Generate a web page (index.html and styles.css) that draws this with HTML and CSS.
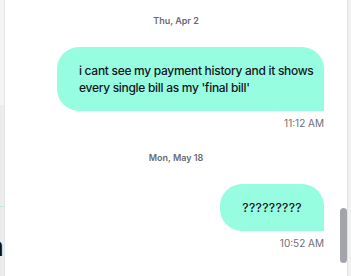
FILE: index.html
```html
<!DOCTYPE html>
<html>
<head>
<meta charset="utf-8">
<link rel="stylesheet" href="styles.css">
</head>
<body>
<div class="app">
  <aside class="side">
    <div class="side-top"></div>
    <div class="side-bottom">
      <div class="side-line"></div>
      <div class="side-letter">a</div>
    </div>
  </aside>
  <main class="chat">
    <div class="date">Thu, Apr 2</div>
    <div class="msg">
      <div class="bubble">i cant see my payment history and it shows every single bill as my 'final bill'</div>
      <div class="time">11:12 AM</div>
    </div>
    <div class="date date-2">Mon, May 18</div>
    <div class="msg">
      <div class="bubble bubble-short">?????????</div>
      <div class="time">10:52 AM</div>
    </div>
    <div class="thumb"></div>
  </main>
  <div class="track"></div>
</div>
</body>
</html>
```
FILE: styles.css
```css
* { box-sizing: border-box; }
html, body { margin: 0; padding: 0; }
body {
  width: 351px;
  height: 276px;
  overflow: hidden;
  background: #fff;
  font-family: "Inter", "Noto Sans", sans-serif;
  color: #1d1d26;
}
.app {
  display: flex;
  height: 276px;
}
.side {
  width: 5px;
  flex: none;
  display: flex;
  flex-direction: column;
  overflow: hidden;
  border-right: 1px solid #e6e6e6;
}
.side-top {
  height: 105px;
  background: #f4f4f4;
}
.side-bottom {
  flex: 1;
  background: #ececec;
  position: relative;
  padding-top: 101px;
}
.side-line {
  height: 1px;
  background: #bfe6e0;
}
.side-letter {
  font-size: 26px;
  line-height: 30px;
  margin-top: 25px;
  margin-left: -11px;
  color: #111;
  font-weight: 500;
}
.chat {
  flex: 1;
  position: relative;
  padding: 15px 23px 0 0;
  display: flex;
  flex-direction: column;
}
.date {
  text-align: center;
  font-size: 9px;
  line-height: 12px;
  font-weight: 600;
  color: #6a6a75;
  padding-left: 23px;
}
.date-2 { margin-top: 23px; }
.msg {
  display: flex;
  flex-direction: column;
  align-items: flex-end;
  margin-top: 20px;
}
.bubble {
  width: 267px;
  background: #96fde0;
  border-radius: 22px 22px 0 22px;
  padding: 15px 2px 15px 22px;
  font-size: 12px;
  line-height: 17px;
  font-weight: 500;
  letter-spacing: -0.3px;
  color: #16161d;
}
.bubble-short {
  width: auto;
  padding: 15px 22px;
  letter-spacing: 0.3px;
}
.time {
  margin-top: 6px;
  font-size: 10px;
  line-height: 12px;
  color: #6f6f78;
}
.thumb {
  position: absolute;
  right: 0;
  top: 208px;
  width: 7px;
  height: 55px;
  border-radius: 4px;
  background: #a3a3ab;
}
.track {
  width: 4px;
  flex: none;
  background: #f1f1f1;
  border-left: 1px solid #e2e2e2;
}
```
